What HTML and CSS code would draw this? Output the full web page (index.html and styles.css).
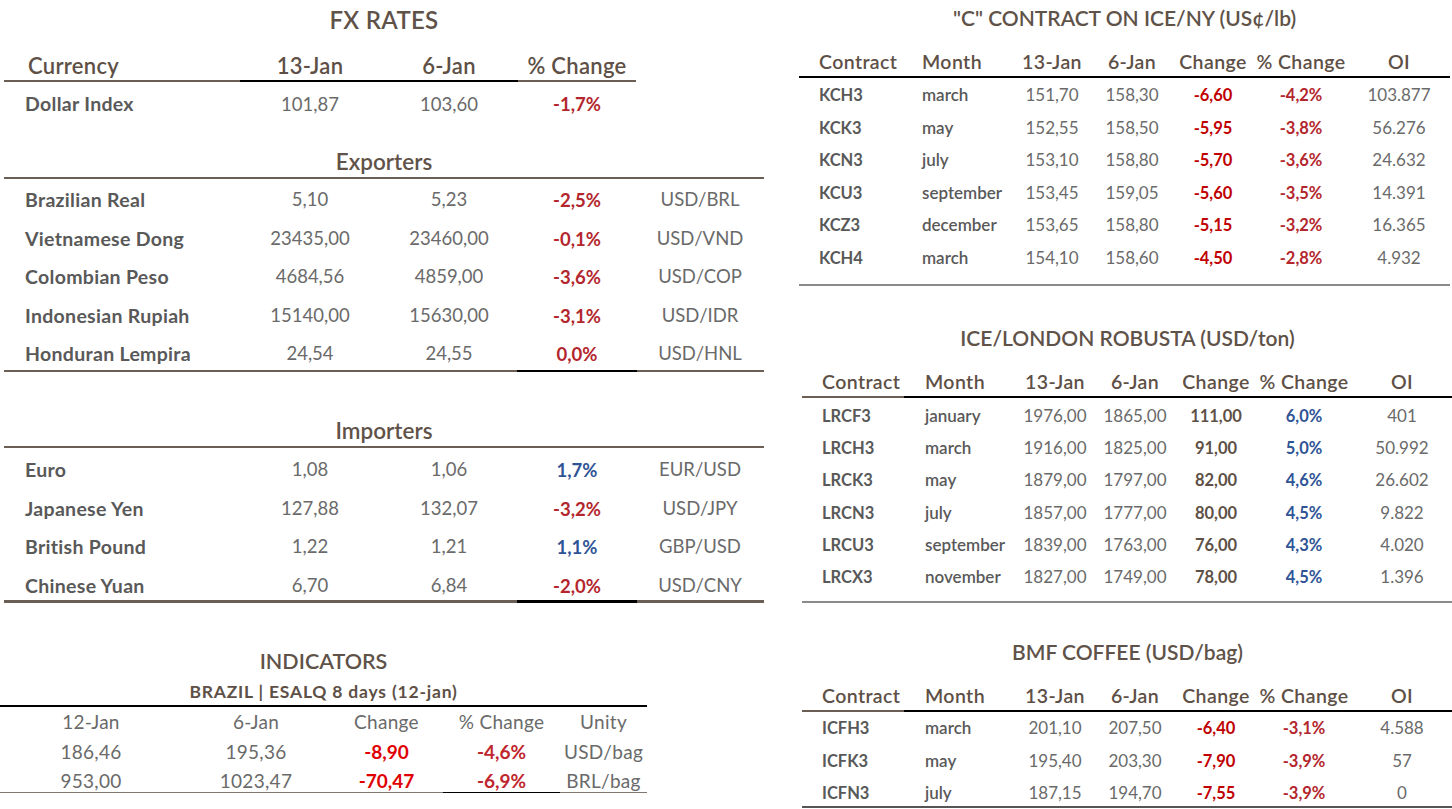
FILE: index.html
```html
<!DOCTYPE html>
<html lang="en">
<head>
<meta charset="utf-8">
<title>Market Report</title>
<link rel="stylesheet" href="styles.css">
</head>
<body>
<div class="page">
  <div class="left">
    <section class="fx">
      <div class="title fx-title">FX RATES</div>
      <div class="g5 fx-head">
        <div class="c n">Currency</div><div class="c">13-Jan</div><div class="c">6-Jan</div><div class="c">% Change</div><div class="c"></div>
      </div>
      <div class="g5 fx-dollar">
        <div class="c n">Dollar Index</div><div class="c v">101,87</div><div class="c v">103,60</div><div class="c neg">-1,7%</div><div class="c"></div>
      </div>
      <div class="title sub sub-exp">Exporters</div>
      <div class="g5 fx-rows exp">
        <div class="c n">Brazilian Real</div><div class="c v">5,10</div><div class="c v">5,23</div><div class="c neg">-2,5%</div><div class="c u">USD/BRL</div>
        <div class="c n">Vietnamese Dong</div><div class="c v">23435,00</div><div class="c v">23460,00</div><div class="c neg">-0,1%</div><div class="c u">USD/VND</div>
        <div class="c n">Colombian Peso</div><div class="c v">4684,56</div><div class="c v">4859,00</div><div class="c neg">-3,6%</div><div class="c u">USD/COP</div>
        <div class="c n">Indonesian Rupiah</div><div class="c v">15140,00</div><div class="c v">15630,00</div><div class="c neg">-3,1%</div><div class="c u">USD/IDR</div>
        <div class="c n">Honduran Lempira</div><div class="c v">24,54</div><div class="c v">24,55</div><div class="c neg">0,0%</div><div class="c u">USD/HNL</div>
      </div>
      <div class="title sub sub-imp">Importers</div>
      <div class="g5 fx-rows imp">
        <div class="c n">Euro</div><div class="c v">1,08</div><div class="c v">1,06</div><div class="c pos">1,7%</div><div class="c u">EUR/USD</div>
        <div class="c n">Japanese Yen</div><div class="c v">127,88</div><div class="c v">132,07</div><div class="c neg">-3,2%</div><div class="c u">USD/JPY</div>
        <div class="c n">British Pound</div><div class="c v">1,22</div><div class="c v">1,21</div><div class="c pos">1,1%</div><div class="c u">GBP/USD</div>
        <div class="c n">Chinese Yuan</div><div class="c v">6,70</div><div class="c v">6,84</div><div class="c neg">-2,0%</div><div class="c u">USD/CNY</div>
      </div>
    </section>
    <section class="ind">
      <div class="ind-top">
        <div class="title ind-title">INDICATORS</div>
        <div class="ind-sub">BRAZIL | ESALQ 8 days (12-jan)</div>
      </div>
      <div class="g5i ind-head">
        <div class="c">12-Jan</div><div class="c">6-Jan</div><div class="c">Change</div><div class="c">% Change</div><div class="c">Unity</div>
      </div>
      <div class="g5i ind-rows">
        <div class="c">186,46</div><div class="c">195,36</div><div class="c chg">-8,90</div><div class="c pct">-4,6%</div><div class="c">USD/bag</div>
        <div class="c">953,00</div><div class="c">1023,47</div><div class="c chg">-70,47</div><div class="c pct">-6,9%</div><div class="c">BRL/bag</div>
      </div>
    </section>
  </div>

  <div class="right">
    <section class="mk ny">
      <div class="title rt rt-ny">"C" CONTRACT ON ICE/NY (US¢/lb)</div>
      <div class="g7 rhead">
        <div class="c k">Contract</div><div class="c m">Month</div><div class="c">13-Jan</div><div class="c">6-Jan</div><div class="c">Change</div><div class="c">% Change</div><div class="c">OI</div>
      </div>
      <div class="g7 rrows ny-rows">
        <div class="c k">KCH3</div><div class="c m">march</div><div class="c v">151,70</div><div class="c v">158,30</div><div class="c chg">-6,60</div><div class="c pct">-4,2%</div><div class="c v">103.877</div>
        <div class="c k">KCK3</div><div class="c m">may</div><div class="c v">152,55</div><div class="c v">158,50</div><div class="c chg">-5,95</div><div class="c pct">-3,8%</div><div class="c v">56.276</div>
        <div class="c k">KCN3</div><div class="c m">july</div><div class="c v">153,10</div><div class="c v">158,80</div><div class="c chg">-5,70</div><div class="c pct">-3,6%</div><div class="c v">24.632</div>
        <div class="c k">KCU3</div><div class="c m">september</div><div class="c v">153,45</div><div class="c v">159,05</div><div class="c chg">-5,60</div><div class="c pct">-3,5%</div><div class="c v">14.391</div>
        <div class="c k">KCZ3</div><div class="c m">december</div><div class="c v">153,65</div><div class="c v">158,80</div><div class="c chg">-5,15</div><div class="c pct">-3,2%</div><div class="c v">16.365</div>
        <div class="c k">KCH4</div><div class="c m">march</div><div class="c v">154,10</div><div class="c v">158,60</div><div class="c chg">-4,50</div><div class="c pct">-2,8%</div><div class="c v">4.932</div>
      </div>
    </section>

    <section class="mk shifted">
      <div class="title rt rt-lon">ICE/LONDON ROBUSTA (USD/ton)</div>
      <div class="g7 rhead split">
        <div class="c k">Contract</div><div class="c m">Month</div><div class="c">13-Jan</div><div class="c">6-Jan</div><div class="c">Change</div><div class="c">% Change</div><div class="c">OI</div>
      </div>
      <div class="g7 rrows lon-rows">
        <div class="c k">LRCF3</div><div class="c m">january</div><div class="c v">1976,00</div><div class="c v">1865,00</div><div class="c up">111,00</div><div class="c pos">6,0%</div><div class="c v">401</div>
        <div class="c k">LRCH3</div><div class="c m">march</div><div class="c v">1916,00</div><div class="c v">1825,00</div><div class="c up">91,00</div><div class="c pos">5,0%</div><div class="c v">50.992</div>
        <div class="c k">LRCK3</div><div class="c m">may</div><div class="c v">1879,00</div><div class="c v">1797,00</div><div class="c up">82,00</div><div class="c pos">4,6%</div><div class="c v">26.602</div>
        <div class="c k">LRCN3</div><div class="c m">july</div><div class="c v">1857,00</div><div class="c v">1777,00</div><div class="c up">80,00</div><div class="c pos">4,5%</div><div class="c v">9.822</div>
        <div class="c k">LRCU3</div><div class="c m">september</div><div class="c v">1839,00</div><div class="c v">1763,00</div><div class="c up">76,00</div><div class="c pos">4,3%</div><div class="c v">4.020</div>
        <div class="c k">LRCX3</div><div class="c m">november</div><div class="c v">1827,00</div><div class="c v">1749,00</div><div class="c up">78,00</div><div class="c pos">4,5%</div><div class="c v">1.396</div>
      </div>
    </section>

    <section class="mk shifted">
      <div class="title rt rt-bmf">BMF COFFEE (USD/bag)</div>
      <div class="g7 rhead split">
        <div class="c k">Contract</div><div class="c m">Month</div><div class="c">13-Jan</div><div class="c">6-Jan</div><div class="c">Change</div><div class="c">% Change</div><div class="c">OI</div>
      </div>
      <div class="g7 rrows bmf-rows">
        <div class="c k">ICFH3</div><div class="c m">march</div><div class="c v">201,10</div><div class="c v">207,50</div><div class="c chg">-6,40</div><div class="c pct">-3,1%</div><div class="c v">4.588</div>
        <div class="c k">ICFK3</div><div class="c m">may</div><div class="c v">195,40</div><div class="c v">203,30</div><div class="c chg">-7,90</div><div class="c pct">-3,9%</div><div class="c v">57</div>
        <div class="c k">ICFN3</div><div class="c m">july</div><div class="c v">187,15</div><div class="c v">194,70</div><div class="c chg">-7,55</div><div class="c pct">-3,9%</div><div class="c v">0</div>
      </div>
    </section>
  </div>
</div>
</body>
</html>
```

FILE: styles.css
```css
* { box-sizing: border-box; margin: 0; padding: 0; }

body {
  margin: 0;
  width: 1452px;
  height: 809px;
  overflow: hidden;
  background: #ffffff;
  font-family: Lato, "Liberation Sans", sans-serif;
  color: #595959;
}

.page { display: flex; }
.left { flex: 0 0 799px; }
.right { flex: 0 0 653px; }

.c { white-space: nowrap; text-align: center; }

.title {
  text-align: center;
  color: #5f5248;
  font-weight: 600;
}

/* ---------- FX RATES ---------- */
.fx { margin-left: 4px; width: 760px; }

.fx-title { height: 40px; line-height: 40px; font-size: 24px; letter-spacing: 0.3px; }

.g5 { display: grid; grid-template-columns: 236px 140px 138px 118px 128px; }

.fx-head {
  height: 42px;
  padding-top: 12px;
  background: linear-gradient(to right, #6b5e55 0 236px, #000 236px 514px, #6b5e55 514px 632px, transparent 632px) left bottom / 100% 2px no-repeat;
}

.fx .c { font-size: 18.5px; }
.fx .n { text-align: left; padding-left: 21px; font-weight: 700; color: #595959; font-size: 19.5px; letter-spacing: 0.3px; }
.fx .v { color: #6a6a6a; }
.fx .u { color: #6a6a6a; }

.fx-head .c { line-height: 28px; font-size: 22px; font-weight: 600; color: #5e5046; letter-spacing: 0.3px; }
.fx-head .n { text-align: left; padding-left: 24px; font-size: 22px; font-weight: 600; color: #5e5046; }

.fx-dollar { height: 44px; }
.fx-dollar .c { line-height: 44px; }

.neg { color: #b3262d; font-weight: 700; }
.pos { color: #2f5496; font-weight: 700; }

.sub {
  font-size: 22.5px;
  line-height: 31px;
  border-bottom: 2px solid #6b5e55;
}
.sub-exp { height: 53px; padding-top: 20px; }
.sub-imp { height: 76px; padding-top: 43px; }

.fx-rows { grid-auto-rows: 38.5px; }
.fx-rows .c { line-height: 38.5px; }
.fx-rows .v, .fx-rows .u { line-height: 36px; }

.exp {
  height: 193px;
  padding-top: 2px;
  background: linear-gradient(to right, #6b5e55 0 513px, #000 513px 633px, #6b5e55 633px) left bottom / 100% 2px no-repeat;
}
.imp {
  height: 155px;
  padding-top: 3px;
  background: linear-gradient(to right, #6b5e55 0 513px, #000 513px 633px, #6b5e55 633px) left bottom / 100% 3px no-repeat;
}

/* ---------- INDICATORS ---------- */
.ind { width: 647px; }
.ind-top {
  padding-top: 44px;
  padding-bottom: 3px;
  border-bottom: 2px solid #000;
}
.ind-title { font-size: 21.5px; line-height: 28px; }
.ind-sub {
  margin-top: 7px;
  line-height: 20px;
  text-align: center;
  font-size: 17.5px;
  font-weight: 700;
  letter-spacing: 0.8px;
  color: #5e5046;
}

.g5i { display: grid; grid-template-columns: 182px 148px 113px 117px 87px; }
.g5i .c { font-size: 19px; color: #6a6a6a; letter-spacing: 0.3px; }

.ind-head { height: 30px; }
.ind-head .c { line-height: 30px; }

.ind-rows {
  height: 56px;
  grid-auto-rows: 29px;
  background: linear-gradient(to right, #7f7772 0 443px, #000 443px 560px, #7f7772 560px) left bottom / 100% 1.5px no-repeat;
}
.ind-rows .c { line-height: 29px; }
.ind-rows .chg { color: #e00000; font-weight: 700; letter-spacing: 0; }
.ind-rows .pct { color: #c0262d; font-weight: 700; letter-spacing: 0; }

/* ---------- RIGHT MARKETS ---------- */
.mk { width: 651px; }
.shifted { margin-left: 3px; }

.rt { font-size: 21px; line-height: 30px; }
.rt-ny { height: 36px; line-height: 36px; }
.rt-lon { height: 67px; padding-top: 37px; }
.rt-bmf { height: 64px; padding-top: 34px; }

.g7 { display: grid; grid-template-columns: 116px 97px 80px 80px 82px 94px 102px; }

.rhead {
  height: 42px;
  padding-top: 12px;
  border-bottom: 2px solid #000;
}
.rhead.split {
  height: 45px;
  padding-top: 15px;
  border-bottom: 0;
  background: linear-gradient(to right, #6b5e55 0 102px, #000 102px) left bottom / 100% 2px no-repeat;
}
.rhead .c { line-height: 28px; font-size: 19.5px; font-weight: 600; color: #5e5046; letter-spacing: 0.4px; }
.g7 .k { text-align: left; padding-left: 20px; }
.g7 .m { text-align: left; padding-left: 7px; }

.rrows .c { font-size: 16.5px; }
.rrows .k { font-weight: 700; color: #595959; }
.rrows .m { font-weight: 600; color: #595959; font-size: 17px; }
.rrows .v { color: #6a6a6a; font-size: 17px; }
.rrows .chg { color: #c00000; font-weight: 700; }
.rrows .pct { color: #b3262d; font-weight: 700; }
.rrows .up { color: #5e5046; font-weight: 700; }

.ny-rows {
  height: 208px;
  padding-top: 1px;
  grid-auto-rows: 32.6px;
  border-bottom: 2px solid #8a8a8a;
}
.ny-rows .c { line-height: 32.6px; }

.lon-rows {
  height: 205px;
  padding-top: 2px;
  grid-auto-rows: 32.2px;
  border-bottom: 2px solid #8a8a8a;
}
.lon-rows .c { line-height: 32.2px; }

.bmf-rows {
  height: 96px;
  grid-auto-rows: 32.5px;
  border-bottom: 2px solid #555;
}
.bmf-rows .c { line-height: 32.5px; }
```
